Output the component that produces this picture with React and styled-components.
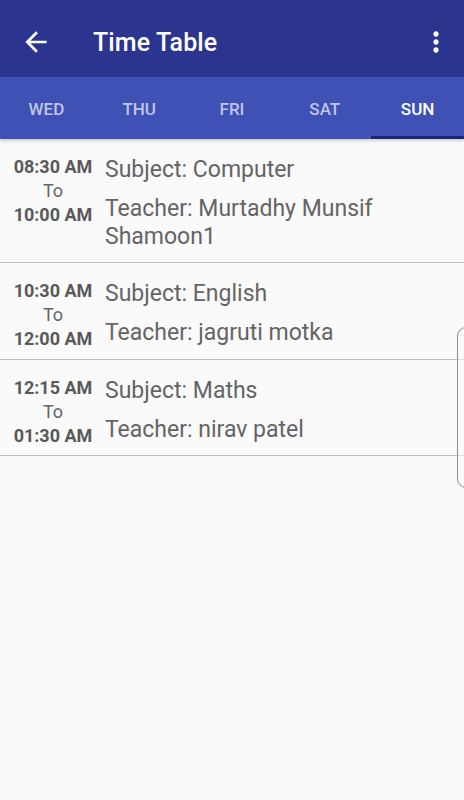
import React from "react";
import styled, { createGlobalStyle } from "styled-components";

const Global = createGlobalStyle`
  html, body { margin: 0; padding: 0; background: #fafafa; }
  body { font-family: Roboto, "Noto Sans", "Liberation Sans", sans-serif; }
  * { box-sizing: border-box; }
`;

const Screen = styled.div`
  width: 464px;
  height: 800px;
  background: #fafafa;
  position: relative;
  overflow: hidden;
  display: flex;
  flex-direction: column;
`;

const Toolbar = styled.header`
  height: 77px;
  background: #2b3590;
  display: flex;
  align-items: center;
  padding: 7px 12px 0 20px;
  color: #fff;
`;

const IconButton = styled.div`
  width: 32px;
  height: 32px;
  display: flex;
  align-items: center;
  justify-content: center;
`;

const Title = styled.h1`
  margin: 0 0 0 41px;
  font-size: 25px;
  font-weight: 500;
  flex: 1;
  letter-spacing: 0.1px;
`;

const Tabs = styled.nav`
  height: 62px;
  background: #3f51b5;
  display: grid;
  grid-template-columns: repeat(5, 1fr);
  box-shadow: 0 2px 3px rgba(0, 0, 0, 0.18);
  position: relative;
  z-index: 1;
`;

const Tab = styled.div`
  display: flex;
  align-items: center;
  justify-content: center;
  font-size: 17px;
  font-weight: 500;
  color: ${(p) => (p.$active ? "#ffffff" : "rgba(255,255,255,0.68)")};
  border-bottom: 3px solid ${(p) => (p.$active ? "#1a237e" : "transparent")};
  padding-top: 4px;
`;

const List = styled.main`
  display: flex;
  flex-direction: column;
`;

const Row = styled.div`
  display: flex;
  padding: 16px 0 6px;
  border-bottom: 1px solid #bdbdbd;
`;

const TimeCol = styled.div`
  width: 105px;
  display: flex;
  flex-direction: column;
  align-items: center;
  color: #595959;
  font-size: 18px;
  line-height: 24px;
  padding-left: 1px;
`;

const TimeText = styled.span`
  font-weight: 700;
`;

const ToText = styled.span`
  font-weight: 400;
  color: #666;
`;

const InfoCol = styled.div`
  flex: 1;
  padding: 0 40px 6px 0;
  color: #646464;
  font-size: 23px;
`;

const Subject = styled.div`
  line-height: 30px;
`;

const Teacher = styled.div`
  margin-top: 10px;
  line-height: 27.5px;
`;

const EdgeHandle = styled.div`
  position: absolute;
  right: -4px;
  top: 327px;
  width: 11px;
  height: 161px;
  border: 1.5px solid #8a8a8a;
  border-radius: 9px 0 0 9px;
  background: rgba(250, 250, 250, 0.6);
`;

const days = ["WED", "THU", "FRI", "SAT", "SUN"];
const rows = [
  { from: "08:30 AM", to: "10:00 AM", subject: "Computer", teacher: "Murtadhy Munsif Shamoon1" },
  { from: "10:30 AM", to: "12:00 AM", subject: "English", teacher: "jagruti motka" },
  { from: "12:15 AM", to: "01:30 AM", subject: "Maths", teacher: "nirav patel" },
];

export default function App() {
  return (
    <Screen>
      <Global />
      <Toolbar>
        <IconButton>
          <svg width="32" height="32" viewBox="0 0 24 24" fill="#fff">
            <path d="M20 11H7.83l5.59-5.59L12 4l-8 8 8 8 1.41-1.41L7.83 13H20v-2z" />
          </svg>
        </IconButton>
        <Title>Time Table</Title>
        <IconButton>
          <svg width="32" height="32" viewBox="0 0 24 24" fill="#fff">
            <path d="M12 8c1.1 0 2-.9 2-2s-.9-2-2-2-2 .9-2 2 .9 2 2 2zm0 2c-1.1 0-2 .9-2 2s.9 2 2 2 2-.9 2-2-.9-2-2-2zm0 6c-1.1 0-2 .9-2 2s.9 2 2 2 2-.9 2-2-.9-2-2-2z" />
          </svg>
        </IconButton>
      </Toolbar>
      <Tabs>
        {days.map((d) => (
          <Tab key={d} $active={d === "SUN"}>{d}</Tab>
        ))}
      </Tabs>
      <List>
        {rows.map((r) => (
          <Row key={r.from}>
            <TimeCol>
              <TimeText>{r.from}</TimeText>
              <ToText>To</ToText>
              <TimeText>{r.to}</TimeText>
            </TimeCol>
            <InfoCol>
              <Subject>Subject: {r.subject}</Subject>
              <Teacher>Teacher: {r.teacher}</Teacher>
            </InfoCol>
          </Row>
        ))}
      </List>
      <EdgeHandle />
    </Screen>
  );
}
